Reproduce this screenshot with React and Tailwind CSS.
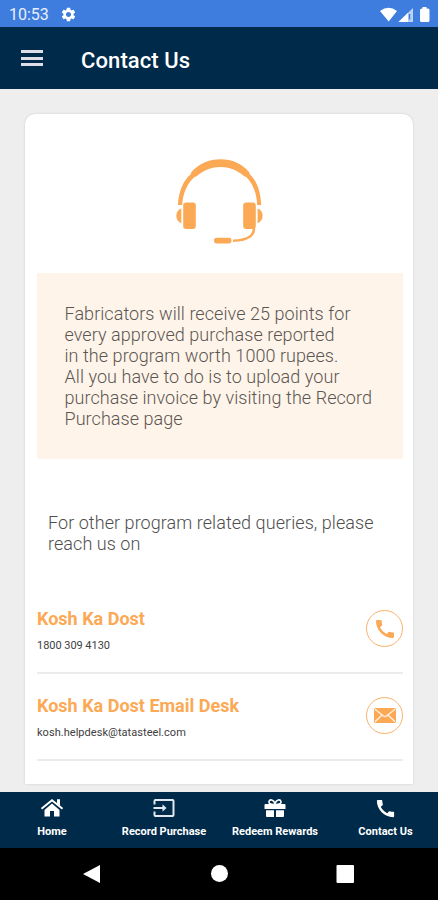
import { MdSettings, MdCall } from 'react-icons/md'

const contacts = [
  { title: 'Kosh Ka Dost', detail: '1800 309 4130', icon: PhoneIcon, detailClass: 'tracking-[-0.04px]' },
  { title: 'Kosh Ka Dost Email Desk', detail: 'kosh.helpdesk@tatasteel.com', icon: MailIcon, detailClass: 'tracking-[0.04px]' },
]

const tabs = [
  { label: 'Home', icon: HomeIcon, width: 'w-[104px]' },
  { label: 'Record Purchase', icon: RecordIcon, width: 'w-[120px]' },
  { label: 'Redeem Rewards', icon: GiftIcon, width: 'w-[102px]' },
  { label: 'Contact Us', icon: TabPhoneIcon, width: 'w-[112px] pl-[7px]' },
]

function PhoneIcon() {
  return <MdCall className="h-[24px] w-[24px]" />
}

function TabPhoneIcon() {
  return <MdCall className="h-[23px] w-[23px]" />
}

function MailIcon() {
  return (
    <svg viewBox="0 0 22 15" className="h-[15px] w-[22px]">
      <rect width="22" height="15" rx="1.5" fill="currentColor" />
      <path d="M1 1.2 L9.5 8 Q11 9.2 12.5 8 L21 1.2 M1 13.8 L8 7 M21 13.8 L14 7" fill="none" stroke="#fff2e4" strokeWidth="1.3" />
    </svg>
  )
}

function HomeIcon() {
  return (
    <svg viewBox="0 0 24 20" className="h-[20px] w-[24px]" fill="currentColor">
      <path d="M12 5.6 L19.5 12 V18.5 H14 V13 H10 V18.5 H4.5 V12 Z" />
      <path d="M1.5 10.7 L12 2.2 L22.5 10.7" fill="none" stroke="currentColor" strokeWidth="2" />
      <path d="M17 1.2 H20 V8 L17 5.6 Z" />
    </svg>
  )
}

function RecordIcon() {
  return (
    <svg viewBox="0 0 24 20" className="h-[20px] w-[24px]" fill="none" stroke="#e3e8f2" strokeWidth="2">
      <path d="M2.5 6.5 V3 Q2.5 2 3.5 2 H20.5 Q21.5 2 21.5 3 V17 Q21.5 18 20.5 18 H3.5 Q2.5 18 2.5 17 V13.5" />
      <path d="M1.5 10 H11" />
      <path d="M10.5 6.3 L14.5 10 L10.5 13.7 Z" fill="#e3e8f2" stroke="none" />
    </svg>
  )
}

function GiftIcon() {
  return (
    <svg viewBox="0 0 24 20" className="h-[20px] w-[24px]" fill="currentColor">
      <path d="M2.5 6 H21.5 Q22.5 6 22.5 7 V11 H1.5 V7 Q1.5 6 2.5 6 Z" />
      <path d="M3 12.3 H11 V19 H4 Q3 19 3 18 Z M13 12.3 H21 V18 Q21 19 20 19 H13 Z" />
      <path d="M11.5 6.5 C7 6.5 5.5 5 6 3.4 C6.8 1 10.5 1.2 12 5.5 C13.5 1.2 17.2 1 18 3.4 C18.5 5 17 6.5 12.5 6.5" fill="none" stroke="currentColor" strokeWidth="1.6" />
    </svg>
  )
}

function Headset() {
  return (
    <svg viewBox="0 0 88 86" className="h-[86px] w-[88px]" fill="#fca956">
      {/* Band */}
      <path d="M1.9 46 C2.7 31 8 21 14.5 15.5 L15.5 13 C23 4.5 33 .3 44.5 .3 C56 .3 66 4.5 73 13 L74 15.5 C80.5 22 84.5 31 85.2 46 L81.2 46 C80.5 33 76.5 24 70.3 18 L68.3 17.3 C61 11 53 8 44.500 8 C36 8 28 11 20.7 17.3 L18.5 18 C11.5 24.5 7 33 6.2 46 Z" />
      {/* Ear cushions */}
      <rect x="7.2" y="43.6" width="12.6" height="26.4" rx="3" />
      <rect x="67.2" y="43.6" width="12.6" height="26.4" rx="3" />
      <path d="M5.3 49.5 V64.2 Q.3 62.5 .3 56.8 Q.3 51.2 5.3 49.5 Z M81.6 49.5 V64.2 Q86.6 62.5 86.6 56.8 Q86.6 51.2 81.6 49.5 Z" />
      {/* Microphone */}
      <path d="M77.8 68 C78.8 75.5 73.5 81.3 57 81.8" fill="none" stroke="#fca956" strokeWidth="2.6" />
      <rect x="38" y="78.7" width="17.5" height="5.8" rx="2.4" />
    </svg>
  )
}

function StatusBar() {
  return (
    <div className="flex h-[27px] items-center bg-[#3e7ddd] pt-[2px] pr-[8px] pl-[9px] text-[#e8f0ff]">
      <span className="w-[51px] text-[16px] leading-none">10:53</span>
      <MdSettings className="h-[17px] w-[17px] text-white" />
      <svg viewBox="0 0 50 18" className="ml-auto h-[18px] w-[50px]" fill="#fff">
        <path d="M0 5 Q8.5 -1.5 17 5 L8.7 15.5 Z" />
        <path d="M18.5 16 L33 2 V16 Z" fillOpacity=".65" />
        <path d="M18.5 16 L28 6.8 V16 Z" />
        <path d="M29.5 8 V13.5" stroke="#3e7ddd" strokeWidth="1.5" />
        <path d="M41 3 Q41 2.5 42 2.5 H42.5 V1 H46.5 V2.5 H48 Q49.5 2.5 49.5 4 V14.5 Q49.5 16 48 16 H41.5 Q40 16 40 14.5 V4 Q40 3 41 3 Z" />
      </svg>
    </div>
  )
}

function ContactRow({ title, detail, icon: Icon, detailClass }) {
  return (
    <div className="flex h-[87px] items-start justify-between border-b-2 border-[#ebebed]">
      <div>
        <h2 className="mt-[21px] text-[18px] leading-[22px] font-bold text-[#fca956]">{title}</h2>
        <p className={`mt-[9px] text-[11px] leading-[14px] text-[#404040] ${detailClass}`}>{detail}</p>
      </div>
      <button className="mt-[23px] flex h-[37px] w-[37px] items-center justify-center rounded-full border border-[#fcb269] text-[#fca956]">
        <Icon />
      </button>
    </div>
  )
}

export default function App() {
  return (
    <div className="flex h-[900px] w-[438px] flex-col overflow-hidden bg-[#eeeeee] font-[Roboto,sans-serif]">
      <StatusBar />

      {/* Header */}
      <header className="flex h-[62px] shrink-0 items-center bg-[#002a4a] pl-[21px] text-white">
        <div className="flex w-[22px] flex-col gap-[3.5px]">
          <span className="h-[3px] bg-[#dedee6]" />
          <span className="h-[3px] bg-[#dedee6]" />
          <span className="h-[3px] bg-[#dedee6]" />
        </div>
        <h1 className="ml-[38px] mt-[4px] text-[22px] font-medium tracking-[0.1px]">Contact Us</h1>
      </header>

      {/* Content */}
      <main className="min-h-0 flex-1 px-[25px] pt-[25px] pb-[8px]">
        <div className="h-full overflow-hidden rounded-t-[10px] bg-white pt-[45px] pr-[10px] pl-[12px] shadow-[0_0_2px_#c4c4c4]">
          <div className="flex justify-center">
            <Headset />
          </div>
          <p className="mt-[28px] h-[186px] bg-[#fff4ea] pt-[30px] pl-[27.5px] text-[18px] leading-[21px] font-light tracking-[0.06px] text-[#5a5652]">
            Fabricators will receive 25 points for<br />
            every approved purchase reported<br />
            in the program worth 1000 rupees.<br />
            All you have to do is to upload your<br />
            purchase invoice by visiting the Record<br />
            Purchase page
          </p>
          <p className="mt-[53px] mb-[33px] pl-[11px] text-[18px] leading-[21px] font-light tracking-[0.06px] text-[#4e4e4e]">
            For other program related queries, please<br />
            reach us on
          </p>
          {contacts.map((contact) => (
            <ContactRow key={contact.title} {...contact} />
          ))}
        </div>
      </main>

      {/* Bottom tabs */}
      <nav className="flex h-[56px] shrink-0 bg-[#002a4a] text-white">
        {tabs.map(({ label, icon: Icon, width }) => (
          <button key={label} className={`flex shrink-0 flex-col items-center pt-[5px] ${width}`}>
            <span className="flex h-[22px] items-center">
              <Icon />
            </span>
            <span className="mt-[6px] text-[11px] leading-[14px] font-bold whitespace-nowrap">{label}</span>
          </button>
        ))}
      </nav>

      {/* System navigation */}
      <div className="h-[52px] shrink-0 bg-black">
        <svg viewBox="0 0 438 52" className="h-[52px] w-[438px]" fill="#fff">
          <path d="M83 26 L100 17 V35 Z" />
          <circle cx="219.5" cy="25.5" r="8.5" />
          <rect x="336.5" y="17" width="17.5" height="18" rx="1" />
        </svg>
      </div>
    </div>
  )
}
